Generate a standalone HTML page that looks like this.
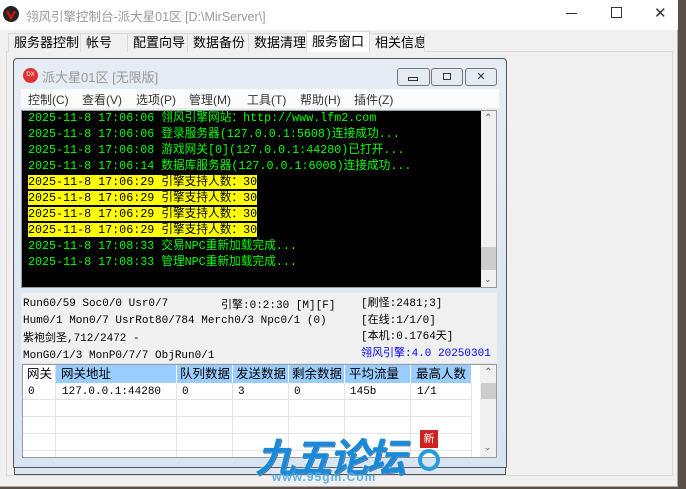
<!DOCTYPE html>
<html><head><meta charset="utf-8"><style>
*{margin:0;padding:0;box-sizing:border-box}
body{width:686px;height:489px;overflow:hidden;background:#5a5048;position:relative;font-family:"Liberation Sans","Noto Sans CJK SC",sans-serif;font-size:12px}
.abs{position:absolute;white-space:nowrap}
.mono{font-family:"Liberation Mono","Noto Sans CJK SC",monospace}
.tab{position:absolute;top:0;height:19px;border:1px solid #d9d9d9;border-bottom:none;background:#f0f0f0;font-size:13px;line-height:17px;padding-left:5px;white-space:nowrap;overflow:hidden}
</style></head><body>
<div class="abs" style="left:0;top:0;width:678px;height:487px;background:#f0f0f0;border-right:1px solid #aaa;border-bottom:1px solid #aaa"></div>
<div class="abs" style="left:0;top:0;width:678px;height:30px;background:#fff"></div>
<div class="abs" style="left:3px;top:6px;width:16px;height:16px;border-radius:50%;background:#222"></div>
<svg class="abs" style="left:3px;top:6px" width="16" height="16"><path d="M4 5 L8 12 L12 5" stroke="#d01010" stroke-width="2.5" fill="none"/></svg>
<div class="abs" style="left:26px;top:6px;color:#999;font-size:12.5px">翎风引擎控制台-派大星01区 [D:\MirServer\]</div>
<div class="abs" style="left:566px;top:13px;width:11px;height:1px;background:#333"></div>
<div class="abs" style="left:611px;top:7px;width:11px;height:11px;border:1px solid #333"></div>
<div class="abs" style="left:654px;top:4px;font-size:15px;color:#333">✕</div>
<!-- tabs -->
<div class="abs" style="left:6px;top:51px;width:667px;height:425px;border:1px solid #d9d9d9;background:#f0f0f0"></div>
<div class="abs" style="left:0;top:33px;width:686px;height:19px">
<div class="tab" style="left:8px;width:73px">服务器控制</div>
<div class="tab" style="left:80px;width:48px">帐号</div>
<div class="tab" style="left:127px;width:61px">配置向导</div>
<div class="tab" style="left:187px;width:62px">数据备份</div>
<div class="tab" style="left:248px;width:59px">数据清理</div>
<div class="tab" style="left:306px;width:64px;top:-2px;height:21px;background:#fff;line-height:19px">服务窗口</div>
<div class="tab" style="left:369px;width:56px">相关信息</div>
</div>
<!-- back window -->
<div class="abs" style="left:14px;top:455px;width:492px;height:20px;border:1px solid #555;background:#dce6f0"></div>
<!-- inner window -->
<div class="abs" style="left:13px;top:58px;width:494px;height:410px;border:1px solid #555;border-radius:4px 4px 0 0;background:linear-gradient(#e6ecf3,#d7e4f2)"></div>
<div class="abs" style="left:23px;top:68px;width:15px;height:15px;border-radius:50%;background:#e03030;color:#fff;font-size:6px;text-align:center;line-height:15px">DX</div>
<div class="abs" style="left:42px;top:67px;color:#999;font-size:13px">派大星01区 [无限版]</div>
<div class="abs" style="left:397px;top:68px;width:33px;height:18px;border:1px solid #777;border-radius:3px;background:#e4ebf3"></div>
<div class="abs" style="left:408px;top:77px;width:10px;height:4px;border:1px solid #333"></div>
<div class="abs" style="left:431px;top:68px;width:32px;height:18px;border:1px solid #777;border-radius:3px;background:#e4ebf3"></div>
<div class="abs" style="left:443px;top:73px;width:8px;height:7px;border:1px solid #333"></div>
<div class="abs" style="left:465px;top:68px;width:32px;height:18px;border:1px solid #777;border-radius:3px;background:#e4ebf3;text-align:center;font-size:11px;line-height:16px;color:#333">✕</div>
<!-- menu -->
<div class="abs" style="left:21px;top:89px;width:478px;height:19px;background:#fbfbfb"></div>
<div class="abs" style="left:28px;top:91px;font-size:12px;color:#333">
<span class="abs" style="left:0">控制(C)</span><span class="abs" style="left:54px">查看(V)</span><span class="abs" style="left:108px">选项(P)</span><span class="abs" style="left:161px">管理(M)</span><span class="abs" style="left:219px">工具(T)</span><span class="abs" style="left:272px">帮助(H)</span><span class="abs" style="left:326px">插件(Z)</span></div>
<!-- console -->
<div class="abs" style="left:21px;top:110px;width:476px;height:178px;border:1px solid #999;background:#000"></div>
<div class="abs" style="left:481px;top:111px;width:15px;height:176px;background:#f0f0f0"></div>
<div class="abs" style="left:481px;top:247px;width:15px;height:23px;background:#cdcdcd"></div>
<div class="abs" style="left:484px;top:113px;color:#606060;font-size:10px">⌃</div>
<div class="abs" style="left:484px;top:274px;color:#606060;font-size:9px">⌄</div>
<div class="abs mono" style="left:28px;top:110px;font-size:11.7px;line-height:16px;color:#0f0"><div>2025-11-8 17:06:06 翎风引擎网站：http://www.lfm2.com</div><div>2025-11-8 17:06:06 登录服务器(127.0.0.1:5608)连接成功...</div><div>2025-11-8 17:06:08 游戏网关[0](127.0.0.1:44280)已打开...</div><div>2025-11-8 17:06:14 数据库服务器(127.0.0.1:6008)连接成功...</div><div><span style="background:#ff0;color:#000">2025-11-8 17:06:29 引擎支持人数：30</span></div><div><span style="background:#ff0;color:#000">2025-11-8 17:06:29 引擎支持人数：30</span></div><div><span style="background:#ff0;color:#000">2025-11-8 17:06:29 引擎支持人数：30</span></div><div><span style="background:#ff0;color:#000">2025-11-8 17:06:29 引擎支持人数：30</span></div><div>2025-11-8 17:08:33 交易NPC重新加载完成...</div><div>2025-11-8 17:08:33 管理NPC重新加载完成...</div></div>
<!-- info -->
<div class="abs" style="left:21px;top:293px;width:476px;height:70px;background:#f0f0f0"></div>
<div class="abs mono" style="left:23px;top:296px;font-size:11px;line-height:16.5px;color:#000"><div>Run60/59 Soc0/0 Usr0/7</div><div>Hum0/1 Mon0/7 UsrRot80/784 Merch0/3 Npc0/1 (0)</div><div><span style="font-family:'Noto Sans CJK SC'">紫袍剑圣</span>,712/2472 -</div><div>MonG0/1/3 MonP0/7/7 ObjRun0/1</div></div>
<div class="abs mono" style="left:221px;top:296px;font-size:11px">引擎:0:2:30 [M][F]</div>
<div class="abs mono" style="left:361px;top:296px;font-size:11px;line-height:16.5px"><div>[刷怪:2481;3]</div><div>[在线:1/1/0]</div><div>[本机:0.1764天]</div><div style="color:#0000ff">翎风引擎:4.0 20250301</div></div>
<!-- table -->
<div class="abs" style="left:22px;top:364px;width:475px;height:94px;border:1px solid #999;background:#fff"></div>
<div class="abs" style="left:480px;top:365px;width:16px;height:92px;background:#f0f0f0"></div>
<div class="abs" style="left:481px;top:383px;width:15px;height:16px;background:#cdcdcd"></div>
<div class="abs" style="left:484px;top:367px;color:#606060;font-size:10px">⌃</div>
<div class="abs" style="left:484px;top:442px;color:#606060;font-size:9px">⌄</div>
<div class="abs" style="left:23px;top:365px;width:448px;height:18px;font-size:12.5px;line-height:18px">
<div class="abs" style="left:0;width:33px;padding-left:4px;border-right:1px solid #ddd;height:18px">网关</div>
<div class="abs" style="left:33px;width:121px;background:#99ccff;padding-left:5px;border-right:1px solid #fff;height:18px">网关地址</div>
<div class="abs" style="left:154px;width:56px;background:#99ccff;padding-left:3px;border-right:1px solid #fff;height:18px;overflow:hidden">队列数据</div>
<div class="abs" style="left:210px;width:56px;background:#99ccff;padding-left:3px;border-right:1px solid #fff;height:18px;overflow:hidden">发送数据</div>
<div class="abs" style="left:266px;width:56px;background:#99ccff;padding-left:3px;border-right:1px solid #fff;height:18px;overflow:hidden">剩余数据</div>
<div class="abs" style="left:322px;width:66px;background:#99ccff;padding-left:4px;border-right:1px solid #fff;height:18px">平均流量</div>
<div class="abs" style="left:388px;width:60px;background:#99ccff;padding-left:5px;height:18px">最高人数</div>
</div>
<div class="abs" style="left:23px;top:383px;width:448px;height:74px;background:repeating-linear-gradient(#fff 0 16px,#e4e4e4 16px 17px)"></div>
<div class="abs" style="left:55px;top:383px;width:1px;height:74px;background:#e4e4e4"></div>
<div class="abs" style="left:176px;top:383px;width:1px;height:74px;background:#e4e4e4"></div>
<div class="abs" style="left:232px;top:383px;width:1px;height:74px;background:#e4e4e4"></div>
<div class="abs" style="left:288px;top:383px;width:1px;height:74px;background:#e4e4e4"></div>
<div class="abs" style="left:344px;top:383px;width:1px;height:74px;background:#e4e4e4"></div>
<div class="abs" style="left:410px;top:383px;width:1px;height:74px;background:#e4e4e4"></div>
<div class="abs" style="left:471px;top:383px;width:1px;height:74px;background:#e4e4e4"></div>
<div class="abs mono" style="left:23px;top:384px;font-size:11px;line-height:16px"><span class="abs" style="left:5px">0</span><span class="abs" style="left:39px">127.0.0.1:44280</span><span class="abs" style="left:159px">0</span><span class="abs" style="left:215px">3</span><span class="abs" style="left:271px">0</span><span class="abs" style="left:327px">145b</span><span class="abs" style="left:394px">1/1</span></div>
<!-- watermark -->
<div class="abs" style="left:255px;top:426px;font-size:40px;font-weight:bold;font-style:italic;color:#1a8ad8;letter-spacing:-3px;text-shadow:0 0 2px #fff,1px 1px 0 #0a4a8a">九五论坛</div>
<div class="abs" style="left:418px;top:449px;width:22px;height:22px;border-radius:50%;border:4px solid #2a9ae0"></div>
<div class="abs" style="left:420px;top:430px;width:18px;height:18px;background:#d02020;color:#fff;font-size:11px;text-align:center;line-height:18px">新</div>
<div class="abs" style="left:272px;top:470px;font-size:12px;font-weight:bold;color:#5ab0ea;letter-spacing:1px">www.95gm.Com</div>
</body></html>
